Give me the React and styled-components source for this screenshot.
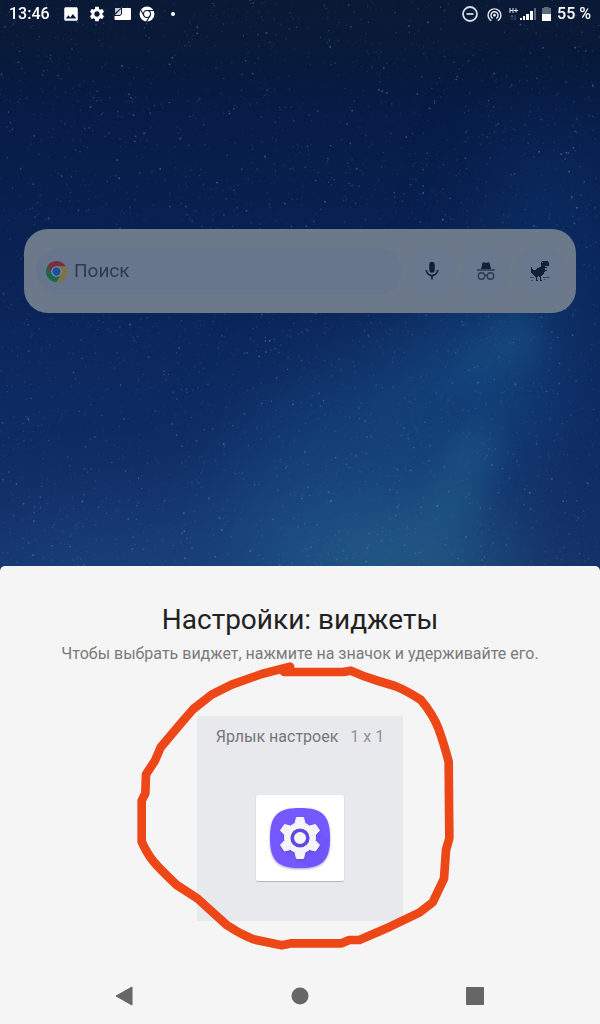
import styled, { createGlobalStyle } from 'styled-components';
import { MdImage, MdSettings, MdWifiTethering, MdMic } from 'react-icons/md';

const GlobalStyle = createGlobalStyle`
  * {
    box-sizing: border-box;
  }

  body {
    margin: 0;
    background: #f5f5f5;
    font-family: Roboto, "Noto Sans", sans-serif;
  }

  button {
    border: 0;
    padding: 0;
    background: none;
    cursor: pointer;
  }

  svg {
    display: block;
  }
`;

const Screen = styled.div`
  min-height: 100vh;
  display: flex;
  flex-direction: column;
  overflow: hidden;
`;

const Home = styled.main`
  position: relative;
  isolation: isolate;
  flex: 1;
  display: flex;
  flex-direction: column;
  padding-bottom: 252px;
`;

const Wallpaper = styled.svg`
  position: absolute;
  inset: 0 0 -6px;
  width: 100%;
  height: calc(100% + 6px);
  z-index: -1;
`;

const StatusBar = styled.header`
  display: flex;
  align-items: center;
  justify-content: space-between;
  height: 28px;
  padding: 0 9px;
  color: #fff;
  font-size: 16px;
  font-weight: 500;
  line-height: 28px;
`;

const StatusGroup = styled.div`
  display: flex;
  align-items: center;
  gap: ${({ $gap }) => $gap}px;
`;

const Clock = styled.time`
  margin-right: 4px;
`;

const SearchWidget = styled.form`
  display: flex;
  align-items: center;
  gap: 6px;
  height: 84px;
  margin: 201px 24px 0;
  padding: 0 12px;
  border-radius: 24px;
  background: #6b798b;
`;

const SearchField = styled.label`
  flex: 1;
  min-width: 0;
  display: flex;
  align-items: center;
  gap: 7px;
  height: 46px;
  padding: 0 10px;
  border-radius: 23px;
  background: #67768d;
`;

const SearchInput = styled.input`
  flex: 1;
  min-width: 0;
  padding: 0;
  border: 0;
  outline: 0;
  background: none;
  color: #2c3a52;
  font: 400 19px/24px Roboto, "Noto Sans", sans-serif;

  &::placeholder {
    color: #2c3a52;
    opacity: 1;
  }
`;

const RoundButton = styled.button`
  display: grid;
  place-items: center;
  width: 48px;
  height: 48px;
  border-radius: 50%;
  background: #69788d;
  color: #10203a;
`;

const Sheet = styled.section`
  position: relative;
  display: flex;
  flex-direction: column;
  align-items: center;
  padding: 36px 16px 0;
  border-radius: 5px 5px 0 0;
  background: #f5f5f5;
  text-align: center;
`;

const Title = styled.h1`
  margin: 0;
  color: #212121;
  font-size: 28px;
  font-weight: 400;
  line-height: 36px;
`;

const Hint = styled.p`
  margin: 6px 0 0;
  color: #7a7a7a;
  font-size: 16px;
  line-height: 20px;
`;

const WidgetCell = styled.div`
  position: relative;
  display: flex;
  flex-direction: column;
  align-items: center;
  width: 206px;
  height: 205px;
  margin: 52px 0 47px;
  padding-top: 11px;
  background: #e8e9ed;
`;

const WidgetLabel = styled.div`
  display: flex;
  gap: 12px;
  color: #757679;
  font-size: 16px;
  line-height: 20px;
  white-space: nowrap;
`;

const WidgetSize = styled.span`
  color: #929396;
`;

const WidgetPreview = styled.button`
  display: grid;
  place-items: center;
  width: 88px;
  height: 86px;
  margin-top: 48px;
  border-radius: 2px;
  background: #fff;
  box-shadow: 0 1px 1px #b4b5b9, 0 0 1px #c8c9cc;
`;

const MarkerCircle = styled.svg`
  position: absolute;
  top: -66px;
  left: -77px;
  width: 350px;
  height: 310px;
  pointer-events: none;
`;

const NavBar = styled.nav`
  display: flex;
  justify-content: center;
  gap: 127px;
  height: 56px;
  background: #f5f5f5;
  color: #666;
`;

const NavButton = styled.button`
  display: grid;
  place-items: center;
  width: 48px;
  color: inherit;
`;

// small seeded generator, so the sky is the same on every render
function makeStars(count) {
  let seed = 7;
  const next = () => {
    seed = (seed * 16807) % 2147483647;
    return seed / 2147483647;
  };
  return Array.from({ length: count }, () => ({
    x: next() * 600,
    y: next() * 572,
    r: 0.5 + next() * 0.5,
    o: 0.09 + next() ** 5 * 0.3,
  }));
}

const stars = makeStars(4200);

function Sky() {
  return (
    <Wallpaper viewBox="0 0 600 572" preserveAspectRatio="xMidYMid slice" aria-hidden="true">
      <defs>
        <linearGradient id="sky" x1="0" y1="0" x2="0" y2="1">
          <stop offset="0" stopColor="#0a1935" />
          <stop offset="0.1" stopColor="#081a3b" />
          <stop offset="0.2" stopColor="#071c46" />
          <stop offset="0.42" stopColor="#092152" />
          <stop offset="0.7" stopColor="#0d2a62" />
          <stop offset="1" stopColor="#16326a" />
        </linearGradient>
        <filter id="soft" x="-100%" y="-100%" width="300%" height="300%" colorInterpolationFilters="sRGB">
          <feGaussianBlur stdDeviation="42" />
        </filter>
        <filter id="wisp" x="-100%" y="-100%" width="300%" height="300%" colorInterpolationFilters="sRGB">
          <feTurbulence type="fractalNoise" baseFrequency="0.02" numOctaves="4" seed="4" result="noise" />
          <feDisplacementMap
            in="SourceGraphic"
            in2="noise"
            scale="50"
            xChannelSelector="R"
            yChannelSelector="G"
            result="cloud"
          />
          <feGaussianBlur in="cloud" stdDeviation="13" />
        </filter>
      </defs>
      <rect width="600" height="572" fill="url(#sky)" />
      <g filter="url(#soft)">
        <ellipse cx="370" cy="465" rx="180" ry="100" fill="#174a80" opacity="0.65" transform="rotate(-32 370 465)" />
        <ellipse cx="490" cy="360" rx="65" ry="95" fill="#154a82" opacity="0.65" transform="rotate(25 490 360)" />
        <ellipse cx="550" cy="215" rx="60" ry="90" fill="#0d3470" opacity="0.5" />
        <ellipse cx="190" cy="580" rx="230" ry="70" fill="#1b457f" opacity="0.7" />
        <ellipse cx="390" cy="565" rx="130" ry="65" fill="#235b8a" opacity="0.85" />
      </g>
      <g filter="url(#wisp)">
        <ellipse cx="500" cy="348" rx="42" ry="24" fill="#1b5186" opacity="0.45" transform="rotate(-35 500 348)" />
        <ellipse cx="462" cy="475" rx="28" ry="55" fill="#205c88" opacity="0.45" transform="rotate(30 462 475)" />
        <ellipse cx="400" cy="545" rx="60" ry="28" fill="#286187" opacity="0.2" />
        <ellipse cx="460" cy="415" rx="26" ry="10" fill="#0e3068" opacity="0.3" />
      </g>
      {stars.map((s, i) => (
        <circle key={i} cx={s.x} cy={s.y} r={s.r} fill="#8fb6dc" opacity={s.o} />
      ))}
    </Wallpaper>
  );
}

function CardIcon() {
  return (
    <svg width="17" height="14" viewBox="0 0 17 14" aria-hidden="true">
      <path d="M8 1h8a1 1 0 0 1 1 1v10a1 1 0 0 1-1 1H1.500a1 1 0 0 1-1-1V9H6l2-2z" fill="#fff" />
      <path d="M1 1h6L1 6z" fill="#fff" opacity="0.75" />
      <path d="M7 2v5L5.500 8H1z" fill="#fff" opacity="0.85" />
    </svg>
  );
}

function ChromeMonoIcon() {
  return (
    <svg width="16" height="16" viewBox="0 0 30 30" aria-hidden="true">
      <circle cx="15" cy="15" r="14" fill="#fff" />
      <g fill="none" stroke="#0b1a36" strokeWidth="2">
        <circle cx="15" cy="15" r="6.500" />
        <path d="M15 8.500h13M9.400 18.200 3 7M20.600 18.200 14 29.500" />
      </g>
    </svg>
  );
}

function MoreDot() {
  return (
    <svg width="20" height="4" viewBox="0 0 20 4" aria-hidden="true">
      <circle cx="10" cy="2" r="2" fill="#fff" />
    </svg>
  );
}

function DoNotDisturbIcon() {
  return (
    <svg width="16" height="16" viewBox="0 0 16 16" fill="none" stroke="#d5dae3" strokeWidth="1.800" aria-hidden="true">
      <circle cx="8" cy="8" r="7" />
      <path d="M4.500 8h7" />
    </svg>
  );
}

function MobileDataIcon() {
  return (
    <svg width="9" height="14" viewBox="0 0 9 14" aria-hidden="true">
      <path d="M1 1v5M4 1v5M1 3.500h3M5 3.500h4M7 1.500v4" stroke="#e6e9ef" fill="none" />
      <path d="M3 13V9M1.500 10 3 8l1.500 2M6 8v4M4.500 11.500 6 13l1.500-1.500" stroke="#fff" fill="none" opacity="0.2" />
    </svg>
  );
}

function SignalIcon() {
  return (
    <svg width="16" height="14" viewBox="0 0 16 14" fill="#fff" aria-hidden="true">
      <rect x="0" y="11" width="2" height="2" />
      <rect x="3" y="9" width="2" height="4" />
      <rect x="6" y="7" width="3" height="6" />
      <rect x="10" y="4" width="3" height="9" />
      <rect x="14" y="1" width="2" height="12" opacity="0.35" />
    </svg>
  );
}

function BatteryIcon() {
  return (
    <svg width="9" height="15" viewBox="0 0 9 15" fill="#fff" aria-hidden="true">
      <path d="M0 1h2V0h5v1h2v6H0z" opacity="0.35" />
      <path d="M0 7h9v7H0z" />
    </svg>
  );
}

function ChromeIcon() {
  return (
    <svg width="21" height="21" viewBox="0 0 48 48" aria-hidden="true">
      <path d="M24 12h20.800A24 24 0 0 1 24 48l10.400-18z" fill="#80723a" />
      <path d="M34.400 30 24 48A24 24 0 0 1 3.200 12l10.400 18z" fill="#1b6747" />
      <path d="M24 24 13.600 30 3.200 12A24 24 0 0 1 44.800 12H24z" fill="#76303f" />
      <circle cx="24" cy="24" r="12" fill="#8292a8" />
      <circle cx="24" cy="24" r="9.500" fill="#1d4f9f" />
    </svg>
  );
}

function IncognitoIcon() {
  return (
    <svg width="20" height="20" viewBox="0 0 20 20" aria-hidden="true">
      <path d="M5 8 6.500 2q.3-1 1.300-.8L10 2l2.200-.8q1-.2 1.300.8L15 8z" fill="#10203a" />
      <path d="M1 9h18" stroke="#2b3a50" strokeWidth="1.500" />
      <g fill="none" stroke="#2b3a50" strokeWidth="1.400">
        <circle cx="5.500" cy="15" r="3.200" />
        <circle cx="14.500" cy="15" r="3.200" />
        <path d="M8.700 14.800q1.300-1 2.600 0" />
      </g>
    </svg>
  );
}

function DinoIcon() {
  return (
    <svg width="20" height="20" viewBox="0 0 20 20" aria-hidden="true">
      <path
        d="M12 0h6v1h1v4h-4v1h2v1h-2v2h2v1h-2v1h-1v2h-1v1h-1v1h-1v4h1v1h-2v-4H9v-1H8v1H7v3h1v1H6v-4H5v-1H4v-1H3v-1H2v-1H1V6h1v2h1v1h3V8h1V7h2V6h2V1h1z"
        fill="#10203a"
      />
      <path d="M12 1h1v1h-1z" fill="#4c5b72" />
      <path d="M0 16.500h4M13 16.500h7M1 19.500h2M14 18.500h1" stroke="#3a495f" />
    </svg>
  );
}

function SettingsAppIcon() {
  return (
    <svg width="66" height="66" viewBox="0 0 66 66" aria-hidden="true">
      <defs>
        <filter id="drop" x="-20%" y="-20%" width="140%" height="140%">
          <feDropShadow dx="0" dy="1" stdDeviation="1" floodColor="#46439a" floodOpacity="0.5" />
        </filter>
      </defs>
      <path
        d="M33 3C55 3 63 10 63 33S55 63 33 63 3 56 3 33 11 3 33 3z"
        fill="#7459ff"
        filter="url(#drop)"
      />
      <path d="M52 25l11 11c-1 18-7 25-22 27L28 50z" fill="#6549e8" opacity="0.2" />
      <g filter="url(#drop)">
        <path
          d="M29.500 12.500h7l1.500 6q2.500 1 4.500 2.600l6-1.600 4 6-4.300 4.500q.5 3 0 5.500l4.300 4.500-4 6-6-1.600Q40.500 46 38 47l-1.500 6.500h-7L28 47q-2.500-1-4.500-2.600l-6 1.600-4-6 4.300-4.500q-.5-2.500 0-5.500l-4.300-4.500 4-6 6 1.600Q25.500 19.500 28 18.500z"
          fill="#f5f5f7"
          stroke="#f5f5f7"
          strokeLinejoin="round"
        />
      </g>
      <circle cx="33" cy="33" r="7.800" fill="#f5f5f7" stroke="#6049de" strokeWidth="3.600" />
    </svg>
  );
}

function App() {
  return (
    <>
      <GlobalStyle />
      <Screen>
        <Home>
          <Sky />
          <StatusBar>
            <StatusGroup $gap={8}>
              <Clock>13:46</Clock>
              <MdImage size={18} />
              <MdSettings size={18} />
              <CardIcon />
              <ChromeMonoIcon />
              <MoreDot />
            </StatusGroup>
            <StatusGroup $gap={6}>
              <StatusGroup $gap={8}>
                <DoNotDisturbIcon />
                <MdWifiTethering size={17} color="#e6e9ef" />
              </StatusGroup>
              <StatusGroup $gap={2}>
                <MobileDataIcon />
                <SignalIcon />
              </StatusGroup>
              <BatteryIcon />
              <span>55 %</span>
            </StatusGroup>
          </StatusBar>
          <SearchWidget>
            <SearchField>
              <ChromeIcon />
              <SearchInput type="text" placeholder="Поиск" aria-label="Поиск" />
            </SearchField>
            <RoundButton type="button" aria-label="Голосовой поиск">
              <MdMic size={22} />
            </RoundButton>
            <RoundButton type="button" aria-label="Инкогнито">
              <IncognitoIcon />
            </RoundButton>
            <RoundButton type="button" aria-label="Динозавр">
              <DinoIcon />
            </RoundButton>
          </SearchWidget>
        </Home>
        <Sheet>
          <Title>Настройки: виджеты</Title>
          <Hint>Чтобы выбрать виджет, нажмите на значок и удерживайте его.</Hint>
          <WidgetCell>
            <WidgetLabel>
              <span>Ярлык настроек</span>
              <WidgetSize>1 x 1</WidgetSize>
            </WidgetLabel>
            <WidgetPreview type="button" aria-label="Ярлык настроек">
              <SettingsAppIcon />
            </WidgetPreview>
            <MarkerCircle viewBox="0 0 1050 930" aria-hidden="true">
              <path
                d="M510 50 425 72 335 104 275 134 220 177 187 215 122 292 105 332 78 373 76 430 65 452V575Q80 608 97 630T170 705L232 745 320 825Q360 852 400 868L485 886 515 880H665L688 870H718L810 830 898 788 938 757 972 686 978 600 988 565 986 335Q970 275 955 235T903 150Q860 122 825 108L775 93Q730 80 692 62L670 66H492"
                fill="none"
                stroke="#ed4718"
                strokeWidth="26"
                strokeLinecap="round"
                strokeLinejoin="round"
              />
            </MarkerCircle>
          </WidgetCell>
        </Sheet>
        <NavBar>
          <NavButton type="button" aria-label="Назад">
            <svg width="20" height="20" viewBox="0 0 20 20" aria-hidden="true">
              <path d="M1 10 17 1v18z" fill="currentColor" stroke="currentColor" strokeLinejoin="round" />
            </svg>
          </NavButton>
          <NavButton type="button" aria-label="Домой">
            <svg width="18" height="18" viewBox="0 0 18 18" aria-hidden="true">
              <circle cx="9" cy="9" r="8.500" fill="currentColor" />
            </svg>
          </NavButton>
          <NavButton type="button" aria-label="Недавние">
            <svg width="18" height="18" viewBox="0 0 18 18" aria-hidden="true">
              <rect width="18" height="18" rx="1" fill="currentColor" />
            </svg>
          </NavButton>
        </NavBar>
      </Screen>
    </>
  );
}

export default App;
